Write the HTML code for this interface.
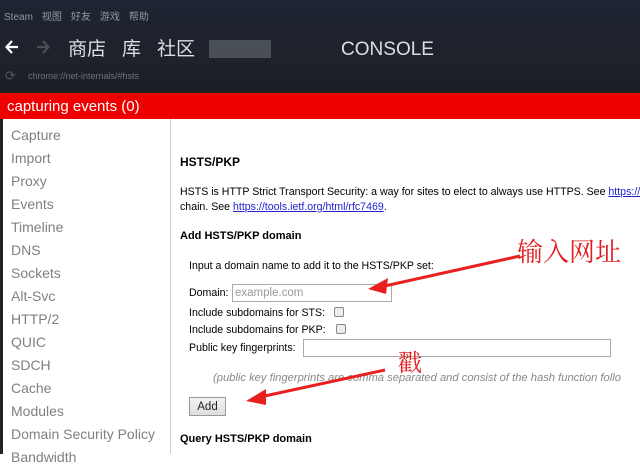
<!DOCTYPE html>
<html><head><meta charset="utf-8"><style>
*{margin:0;padding:0;box-sizing:border-box}
body{width:640px;height:454px;overflow:hidden;background:#fff;font-family:"Liberation Sans","Noto Sans CJK SC",sans-serif;position:relative}
.hdr{position:absolute;left:0;top:0;width:640px;height:93px;background:linear-gradient(180deg,#1d2433 0%,#1e222b 60%,#1c1f25 100%)}
.menu{position:absolute;top:8px;left:4px;font-size:10px;color:#8f98a0}
.menu span{margin-right:9px}
.nav{position:absolute;top:34px;left:68px;font-size:19px;color:#dcdedf;white-space:nowrap}
.url{position:absolute;top:71px;left:28px;font-size:9px;color:#6b7178}
.red{position:absolute;left:0;top:93px;width:640px;height:26px;background:#ee0000;color:#fff;font-size:15px;padding:5px 0 0 7px}
.side{position:absolute;left:0;top:119px;width:171px;height:335px;border-right:1px solid #ccc;border-left:3px solid #222}
.side div{position:absolute;left:8px;font-size:14px;color:#808080}
.t{position:absolute;white-space:nowrap}
a{color:#2222cc}
.cb{position:absolute;width:10px;height:10px;border:1px solid #888;border-radius:2px;background:#eee}
</style></head><body>
<div class="hdr">
<div class="menu"><span>Steam</span><span>视图</span><span>好友</span><span>游戏</span><span>帮助</span></div>
<svg style="position:absolute;left:4px;top:38px" width="50" height="18">
<path d="M14 9H3M8 3L2.5 9 8 15" stroke="#fff" stroke-width="2.2" fill="none"/>
<path d="M33 9h11M39 3l5.5 6L39 15" stroke="#4a4f56" stroke-width="2.2" fill="none"/>
</svg>
<div class="nav"><span>商店</span><span style="margin-left:16px">库</span><span style="margin-left:16px">社区</span><span style="display:inline-block;width:62px;height:18px;background:#555b63;margin:0 70px 0 14px;vertical-align:-3px;opacity:.8"></span><span>CONSOLE</span></div>
<div style="position:absolute;top:68px;left:5px;color:#555;font-size:13px">⟳</div>
<div class="url">chrome://net-internals/#hsts</div>
</div>
<div class="red">capturing events (0)</div>
<div class="side">
<div style="top:8px">Capture</div><div style="top:31px">Import</div><div style="top:54px">Proxy</div><div style="top:77px">Events</div><div style="top:100px">Timeline</div><div style="top:123px">DNS</div><div style="top:146px">Sockets</div><div style="top:169px">Alt-Svc</div><div style="top:192px">HTTP/2</div><div style="top:215px">QUIC</div><div style="top:238px">SDCH</div><div style="top:261px">Cache</div><div style="top:284px">Modules</div><div style="top:307px">Domain Security Policy</div><div style="top:330px">Bandwidth</div>
</div>
<div class="t" style="left:180px;top:155px;font-size:12px;font-weight:bold">HSTS/PKP</div>
<div class="t" style="left:180px;top:186px;font-size:10.6px">HSTS is HTTP Strict Transport Security: a way for sites to elect to always use HTTPS. See <a href="#">https://</a></div>
<div class="t" style="left:180px;top:201px;font-size:10.6px">chain. See <a href="#">https://tools.ietf.org/html/rfc7469</a>.</div>
<div class="t" style="left:180px;top:230px;font-size:11px;font-weight:bold">Add HSTS/PKP domain</div>
<div class="t" style="left:189px;top:260px;font-size:10.6px">Input a domain name to add it to the HSTS/PKP set:</div>
<div class="t" style="left:189px;top:287px;font-size:10.6px">Domain:</div>
<div style="position:absolute;left:232px;top:284px;width:160px;height:18px;border:1px solid #aaa;color:#999;font-size:11.5px;padding:2px 2px">example.com</div>
<div class="t" style="left:189px;top:307px;font-size:10.6px">Include subdomains for STS:</div><div class="cb" style="left:334px;top:307px"></div>
<div class="t" style="left:189px;top:324px;font-size:10.6px">Include subdomains for PKP:</div><div class="cb" style="left:336px;top:324px"></div>
<div class="t" style="left:189px;top:342px;font-size:10.6px">Public key fingerprints:</div>
<div style="position:absolute;left:303px;top:339px;width:308px;height:18px;border:1px solid #aaa"></div>
<div class="t" style="left:213px;top:372px;font-size:11.2px;font-style:italic;color:#888">(public key fingerprints are comma separated and consist of the hash function follo</div>
<div style="position:absolute;left:189px;top:397px;width:37px;height:19px;border:1px solid #999;background:linear-gradient(#f4f4f4,#ddd);font-size:11.5px;text-align:center;padding-top:3px;color:#222">Add</div>
<div class="t" style="left:180px;top:433px;font-size:11px;font-weight:bold">Query HSTS/PKP domain</div>
<div class="t" style="left:517px;top:232px;font-size:26px;color:#e02020;font-family:'Noto Serif CJK SC',serif">输入网址</div>
<div class="t" style="left:398px;top:343px;font-size:24px;color:#e02020;font-family:'Noto Serif CJK SC',serif">戳</div>
<svg style="position:absolute;left:0;top:0" width="640" height="454">
<line x1="520" y1="256" x2="380" y2="287" stroke="#e82020" stroke-width="3"/>
<polygon points="368,289 388,278 386,294" fill="#e82020"/>
<line x1="385" y1="370" x2="260" y2="397" stroke="#e82020" stroke-width="3"/>
<polygon points="246,401 266,389 266,405" fill="#e82020"/>
</svg>
</body></html>
